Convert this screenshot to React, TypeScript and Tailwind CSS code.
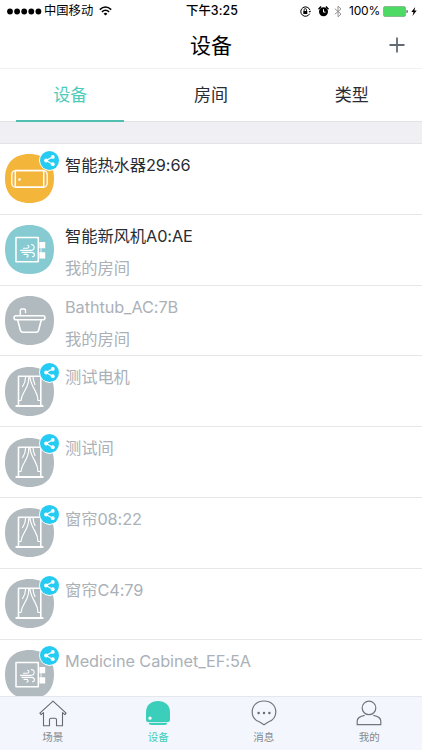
import React from 'react';

type DeviceKind = 'heater' | 'cabinet' | 'bathtub' | 'curtain';

interface Device {
  name: string;
  room?: string;
  kind: DeviceKind;
  color: string;
  online?: boolean;
  shared?: boolean;
}

const devices: Device[] = [
  { name: '智能热水器29:66', kind: 'heater', color: '#f3b53a', online: true, shared: true },
  { name: '智能新风机A0:AE', room: '我的房间', kind: 'cabinet', color: '#86cbd1', online: true },
  { name: 'Bathtub_AC:7B', room: '我的房间', kind: 'bathtub', color: '#b0babf' },
  { name: '测试电机', kind: 'curtain', color: '#b0babf', shared: true },
  { name: '测试间', kind: 'curtain', color: '#b0babf', shared: true },
  { name: '窗帘08:22', kind: 'curtain', color: '#b0babf', shared: true },
  { name: '窗帘C4:79', kind: 'curtain', color: '#b0babf', shared: true },
  { name: 'Medicine Cabinet_EF:5A', kind: 'cabinet', color: '#b0babf', shared: true }
];

const glyphs: Record<DeviceKind, React.ReactNode> = {
  heater: (
    <>
      <rect x="6.8" y="16.6" width="35.4" height="16.6" rx="4" strokeWidth="1.3" />
      <rect x="10.3" y="16.6" width="28.4" height="16.6" strokeWidth="1.5" />
      <circle cx="14.5" cy="25.5" r="1.3" fill="#fff" stroke="none" />
    </>
  ),
  cabinet: (
    <>
      <rect x="11" y="12.5" width="22.3" height="24.3" strokeWidth="1.5" />
      <path d="M34.4 17h5.8v6.2h-5.8zM34.4 27.2h5.8v6.2h-5.8z" fill="#fff" stroke="none" />
      <path d="M36 19v13" strokeWidth=".8" />
      <path
        d="M18.5 23.2h3.6c2.2 0 2.4-2.6.6-3M15.6 25.4h10.2c4.4 0 4.4-5.8.6-5.8M17 27.4h9.6c3.6 0 3.6 4.6.8 4.4M19 29.4h2.6c2 0 2 2.6.2 2.6"
        strokeWidth="1.1"
      />
    </>
  ),
  bathtub: (
    <>
      <path d="M15.3 19.5v-5.2q0-1.3 1.3-1.3h2.6q1.3 0 1.3 1.3v2.2" strokeWidth="1.4" />
      <rect x="9" y="19.8" width="31" height="4" rx="2" strokeWidth="1.6" />
      <path d="M12.7 24l2.7 10.2q.6 2 2.4 2h13.4q1.8 0 2.4-2L36.3 24" strokeWidth="1.6" />
    </>
  ),
  curtain: (
    <>
      <path d="M13.5 38V9.3h22.3V38" strokeWidth="1.6" />
      <path d="M11.3 39h26.4" strokeWidth="2" />
      <path
        d="M23.8 10c0 6-1.6 10-4.2 14-2 3.2-3 5.4-3.6 9.5h-2M25 10c.4 5 2.4 9 5 13.4 1.8 3.2 2.8 5.6 3 10.1h2.4M20.6 10c0 4-1 6.5-3 9.5M28 10c.2 3 .8 5 2 7.5"
        strokeWidth="1.2"
      />
    </>
  )
};

const DeviceIcon = ({ kind, color }: { kind: DeviceKind; color: string }) => (
  <svg className="block h-[49px] w-[49px]" viewBox="0 0 49 49" fill="none">
    <path
      d="M24.5 0C40 0 49 9 49 24.5S40 49 24.5 49 0 40 0 24.5 9 0 24.5 0Z"
      fill={color}
    />
    <g stroke="#fff" strokeLinecap="round" strokeLinejoin="round">{glyphs[kind]}</g>
  </svg>
);

const ShareBadge = () => (
  <svg className="absolute -top-[4.5px] left-[33.5px] h-[21px] w-[21px]" viewBox="0 0 21 21">
    <circle cx="10.5" cy="10.5" r="10.4" fill="#fff" />
    <circle cx="10.5" cy="10.5" r="9.5" fill="#24cbf2" />
    <path d="M13.8 6.9L7 10.5l6.8 3.7" stroke="#fff" strokeWidth="1.2" fill="none" />
    <circle cx="13.8" cy="6.9" r="1.9" fill="#fff" />
    <circle cx="7.1" cy="10.5" r="2" fill="#fff" />
    <circle cx="13.8" cy="14.2" r="1.9" fill="#fff" />
  </svg>
);

const StatusBar = () => (
  <div className="grid h-[22px] grid-cols-[1fr_auto_1fr] items-center text-[12px] text-black">
    <div className="flex items-center pl-[7px]">
      <svg className="h-[7px] w-[35px]" viewBox="0 0 35 7">
        {[3, 10.1, 17.2, 24.3, 31.4].map((cx) => (
          <circle key={cx} cx={cx} cy="3.5" r="2.9" />
        ))}
      </svg>
      <span className="ml-[2px] text-[12.3px]">中国移动</span>
      <svg className="ml-[6px] h-[10px] w-[13px]" viewBox="0 0 13 10" fill="none" stroke="#000" strokeWidth="1.6">
        <path d="M.8 3.6Q6.5-1.6 12.2 3.6M2.9 5.9Q6.5 2.6 10.1 5.9" />
        <path d="M4.6 7.7Q6.5 6 8.4 7.7L6.5 9.6Z" fill="#000" stroke="none" />
      </svg>
    </div>
    <span className="pl-[2px] text-[12.4px] font-medium tracking-[0.1px]">下午3:25</span>
    <div className="flex items-center justify-end pr-[5px]">
      <svg className="h-[11px] w-[11px]" viewBox="0 0 11 11" fill="none" stroke="#000">
        <path d="M9.7 7.7A4.7 4.7 0 1 1 10 4.2" strokeWidth="1" />
        <path d="M8.7 5h2.3L9.8 6.8Z" fill="#000" stroke="none" />
        <path d="M3.3 5h4v3h-4z" fill="#000" stroke="none" />
        <path d="M4.1 5V3.8q0-1.2 1.2-1.2t1.2 1.2V5" strokeWidth=".9" />
      </svg>
      <svg className="ml-[7px] h-[11px] w-[11px]" viewBox="0 0 11 11">
        <circle cx="5.5" cy="5.8" r="4.5" />
        <path d="M.5 3.2L3.1.6M7.9.6l2.6 2.6" stroke="#000" strokeWidth="1.4" />
        <path d="M5.5 3.2v2.9h2" stroke="#fff" strokeWidth="1" fill="none" />
      </svg>
      <svg className="ml-[5px] h-[13px] w-[8px]" viewBox="0 0 8 12" fill="none" stroke="#888" strokeWidth=".9">
        <path d="M.8 3.2l6.2 5.4L4 11.3V.7l3 2.7L.8 8.8" />
      </svg>
      <span className="ml-[7px] w-[32px] text-[12px] tracking-[-0.2px]">100%</span>
      <svg className="ml-[2px] h-[11px] w-[25px]" viewBox="0 0 25 11">
        <rect x=".5" y=".5" width="22" height="10" rx="1.5" fill="#4cd964" stroke="#78a681" strokeWidth=".7" />
        <path d="M23.5 3.7q1.3.3 1.3 1.8t-1.3 1.8z" fill="#555" />
      </svg>
      <svg className="ml-[3px] h-[9px] w-[6px]" viewBox="0 0 6 9">
        <path d="M4.2 0L.3 5.1h2.2L1.5 9l4.2-5.4H3.4z" />
      </svg>
    </div>
  </div>
);

const TabBar = () => (
  <nav className="grid h-[54px] shrink-0 grid-cols-4 border-t border-[#e4e7eb] bg-[#f3f6fc] text-[10.5px] text-[#85898e]">
    <div className="flex flex-col items-center pt-[3px]">
      <svg className="h-[27px] w-[28px]" viewBox="0 0 28 27" fill="none" stroke="#656a70" strokeWidth="1.1" strokeLinejoin="round">
        <path d="M14 1.2L.9 13.2l1.2 1.4 2.4-2v13.2h6v-6q0-1.6 1.6-1.6h3.8q1.6 0 1.6 1.6v6h6V12.6l2.4 2 1.2-1.4Z" />
      </svg>
      <span className="mt-[2px] leading-[17px]">场景</span>
    </div>
    <div className="flex flex-col items-center pt-[3px] text-[#3bcebb]">
      <svg className="h-[27px] w-[26px]" viewBox="0 0 26 27">
        <path d="M1 20V12.5C1 5 6 1 13 1s12 4 12 11.5V20q0 2-2 2H3q-2 0-2-2Z" fill="#3bcebb" />
        <path d="M3.5 22.7h19q-.7 2.3-2.7 2.3H6.2q-2 0-2.7-2.3Z" fill="#3bcebb" />
        <circle cx="5" cy="18.2" r="1.6" fill="#fff" />
      </svg>
      <span className="mt-[2px] leading-[17px]">设备</span>
    </div>
    <div className="flex flex-col items-center pt-[3px]">
      <svg className="h-[27px] w-[26px]" viewBox="0 0 26 27" fill="none" stroke="#71767c" strokeWidth="1.2">
        <path d="M13 1C5.8 1 1.2 5.6 1.2 12c0 5 2.8 8.2 7.1 9.8L13 24.7l4.7-2.9c4.3-1.6 7.1-4.8 7.1-9.8C24.8 5.6 20.2 1 13 1Z" />
        <g fill="#656a70" stroke="none">
          <circle cx="7.6" cy="13" r="1.2" />
          <circle cx="13" cy="13" r="1.2" />
          <circle cx="18.4" cy="13" r="1.2" />
        </g>
      </svg>
      <span className="mt-[2px] leading-[17px]">消息</span>
    </div>
    <div className="flex flex-col items-center pt-[3px]">
      <svg className="h-[27px] w-[26px]" viewBox="0 0 26 27" fill="none" stroke="#71767c" strokeWidth="1.2">
        <circle cx="13" cy="7.9" r="6.8" />
        <path d="M8.7 15.3C4 16.2 1.2 18.2 1.2 21v3.7h23.6V21c0-2.8-2.8-4.8-7.5-5.7" />
      </svg>
      <span className="mt-[2px] leading-[17px]">我的</span>
    </div>
  </nav>
);

const App = () => {
  return (
    <div className="flex h-[750px] w-[422px] flex-col overflow-hidden bg-white font-['Inter','Noto_Sans_CJK_SC',sans-serif]">
      {/* Header */}
      <header className="h-[69px] shrink-0 border-b border-[#f1f1f2]">
        <StatusBar />
        <div className="grid h-[46px] grid-cols-[1fr_auto_1fr] items-center">
          <span />
          <h1 className="pt-px text-[21px] text-black">设备</h1>
          <svg className="mr-[17px] h-[16px] w-[16px] justify-self-end" viewBox="0 0 16 16" stroke="#626a73" strokeWidth="1.8">
            <path d="M8 .5v15M.5 8h15" />
          </svg>
        </div>
      </header>

      {/* Filter tabs */}
      <div className="grid h-[53px] shrink-0 grid-cols-3 border-b border-[#e1e1e6] text-[17px] text-[#292c33]">
        <div className="flex items-center justify-center">
          <div className="flex h-[53px] w-[108px] items-center justify-center border-b-2 border-[#51bfb0] pt-[2px] text-[#4ecbb8]">
            设备
          </div>
        </div>
        <div className="flex items-center justify-center">房间</div>
        <div className="flex items-center justify-center">类型</div>
      </div>
      <div className="h-[21px] shrink-0 bg-[#efeff4]" />

      {/* Device list */}
      <main className="min-h-0 flex-1 overflow-hidden border-t border-[#e2e3e8]">
        {devices.map((device) => (
          <div key={device.name} className="flex h-[70.8px] border-b border-[#e6e7e9] pl-[5px]">
            <div className="relative mt-[10.4px] h-[49px] w-[49px] shrink-0">
              <DeviceIcon kind={device.kind} color={device.color} />
              {device.shared && <ShareBadge />}
            </div>
            <div className="ml-[11px] pt-[9px]">
              <div className={`text-[16.3px] leading-[25px] tracking-[-0.08px] ${device.online ? 'text-[#292c33]' : 'text-[#abb1b8]'}`}>
                {device.name}
              </div>
              {device.room && <div className="mt-[7px] text-[16.3px] leading-[25px] text-[#abb1b8]">{device.room}</div>}
            </div>
          </div>
        ))}
      </main>

      <TabBar />
    </div>
  );
};

export default App;
